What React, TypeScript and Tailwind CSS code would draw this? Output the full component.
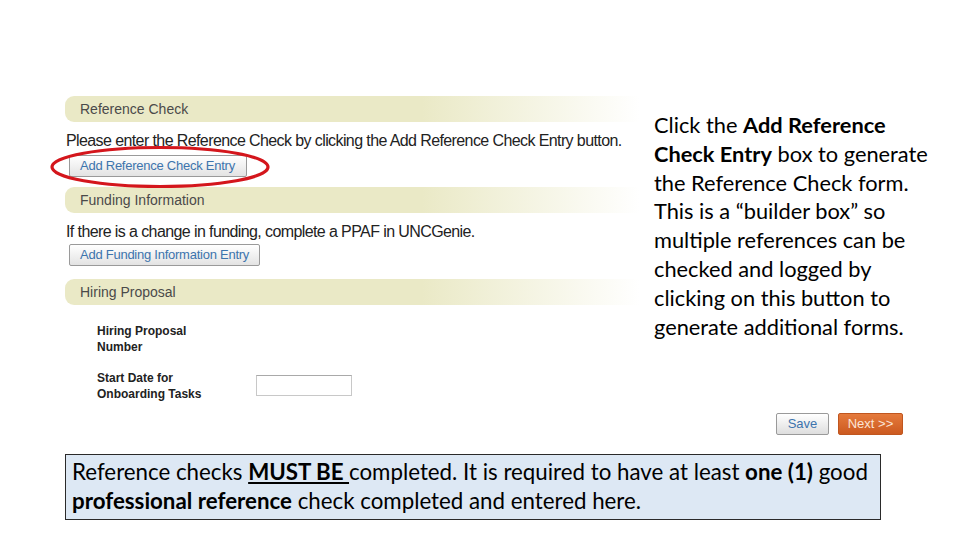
import React from "react";

function SectionHeader({ title }: { title: string }) {
  return (
    <div className="h-[26px] rounded-l-[9px] bg-[linear-gradient(to_right,#eae9c6_0%,#eae9c6_62%,#ffffff_100%)] pl-[15px] flex items-center text-[14px] text-[#4a4a4a] font-['Liberation_Sans',Arial,sans-serif]">
      {title}
    </div>
  );
}

function FormButton({ label, width }: { label: string; width: string }) {
  return (
    <div
      className={`${width} h-[22px] ml-[4px] flex items-center pl-[10px] text-[13px] text-[#3d74ad] tracking-[-0.25px] border border-[#9a9a9a] rounded-[2px] bg-[linear-gradient(to_bottom,#ffffff,#e3e3e3)] font-['Liberation_Sans',Arial,sans-serif]`}
    >
      {label}
    </div>
  );
}

export default function App() {
  return (
    <div className="relative w-[960px] h-[540px] bg-white overflow-hidden font-['Liberation_Sans',Arial,sans-serif]">
      <div className="flex pt-[96px] pl-[65px]">
        {/* left form */}
        <div className="w-[575px] flex flex-col">
          <SectionHeader title="Reference Check" />
          <div className="mt-[10px] ml-[1px] h-[18px] leading-[18px] text-[16px] text-[#222] tracking-[-0.6px] whitespace-nowrap">
            Please enter the Reference Check by clicking the Add Reference Check Entry button.
          </div>
          <div className="mt-[5px]">
            <FormButton label="Add Reference Check Entry" width="w-[178px]" />
          </div>
          <div className="mt-[10px]">
            <SectionHeader title="Funding Information" />
          </div>
          <div className="mt-[10px] ml-[1px] h-[18px] leading-[18px] text-[16px] text-[#222] tracking-[-0.6px] whitespace-nowrap">
            If there is a change in funding, complete a PPAF in UNCGenie.
          </div>
          <div className="mt-[3px]">
            <FormButton label="Add Funding Information Entry" width="w-[191px]" />
          </div>
          <div className="mt-[13px]">
            <SectionHeader title="Hiring Proposal" />
          </div>
          <div className="mt-[18px] ml-[32px] flex flex-col gap-[15px] text-[12px] font-bold text-[#222] leading-[16px]">
            <div className="flex items-center">
              <div className="w-[159px]">
                Hiring Proposal
                <br />
                Number
              </div>
            </div>
            <div className="flex items-start">
              <div className="w-[159px]">
                Start Date for
                <br />
                Onboarding Tasks
              </div>
              <div className="w-[96px] h-[21px] mt-[5px] border border-[#c8c8c8] border-t-[#a9a9a9] bg-white" />
            </div>
          </div>
        </div>
        {/* right explanatory text */}
        <div className="ml-[14px] mt-[15px] w-[300px] text-[21.8px] leading-[28.8px] text-black font-['Lato','Noto_Sans',sans-serif] whitespace-nowrap">
          Click the <b>Add Reference</b>
          <br />
          <b>Check Entry</b> box to generate
          <br />
          the Reference Check form.
          <br />
          This is a “builder box” so
          <br />
          multiple references can be
          <br />
          checked and logged by
          <br />
          clicking on this button to
          <br />
          generate additional forms.
        </div>
      </div>

      {/* Save / Next */}
      <div className="absolute left-[776px] top-[413px] flex gap-[9px]">
        <div className="w-[53px] h-[22px] flex items-center justify-center text-[13px] text-[#3d74ad] border border-[#9a9a9a] rounded-[2px] bg-[linear-gradient(to_bottom,#ffffff,#dedede)]">
          Save
        </div>
        <div className="w-[65px] h-[22px] flex items-center justify-center text-[13px] text-[#fbe4d6] border border-[#c0561f] rounded-[2px] bg-[linear-gradient(to_bottom,#e57a3c,#cc5a20)]">
          Next &gt;&gt;
        </div>
      </div>

      {/* Red ellipse annotation */}
      <svg className="absolute left-[50px] top-[144px]" width="222" height="46" viewBox="0 0 222 46">
        <ellipse cx="110" cy="23" rx="108" ry="19.5" fill="none" stroke="#d4161c" strokeWidth="3.2" />
      </svg>

      {/* Bottom note */}
      <div className="absolute left-[65px] top-[454px] w-[816px] h-[66px] bg-[#dde8f4] border border-[#2a2a2a] px-[6px] pt-[2px] text-[22.3px] leading-[29px] text-black font-['Lato','Noto_Sans',sans-serif] whitespace-nowrap">
        Reference checks <b><u>MUST BE </u></b>completed. It is required to have at least <b>one (1)</b> good
        <br />
        <b>professional reference</b> check completed and entered here.
      </div>
    </div>
  );
}
